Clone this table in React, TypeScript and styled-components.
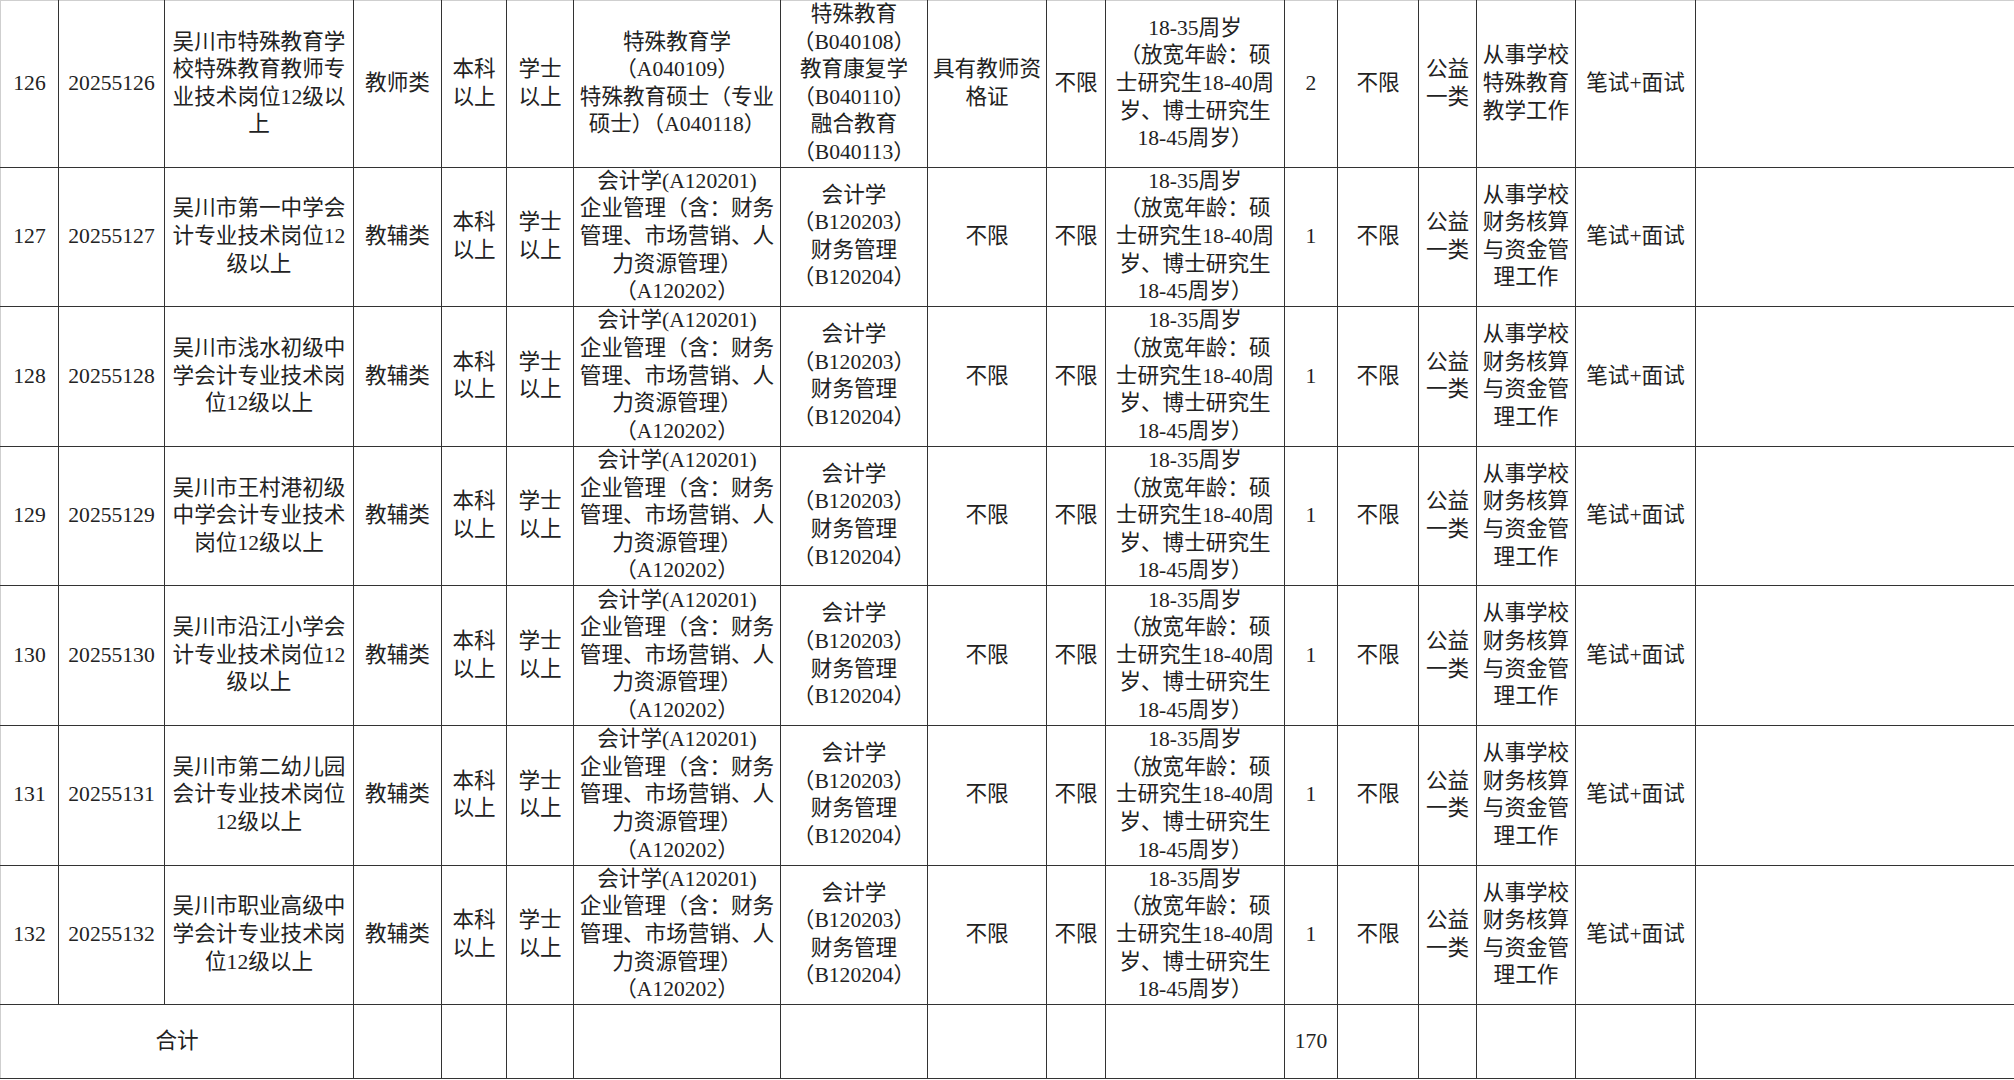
import React from 'react';
import styled, { createGlobalStyle } from 'styled-components';

const GlobalStyle = createGlobalStyle`
  html, body {
    margin: 0;
    padding: 0;
    background: #fff;
    overflow: hidden;
  }
`;

const Sheet = styled.div`
  width: 2014px;
  height: 1080px;
  overflow: hidden;
  background: #fff;
`;

const Table = styled.table`
  border-collapse: collapse;
  table-layout: fixed;
  width: 2095px;
  font-family: "Liberation Serif", "Noto Sans CJK SC", serif;
  font-size: 21.6px;
  line-height: 27.6px;
  color: #222;
`;

const Row = styled.tr<{ $h: number }>`
  height: ${props => props.$h}px;

  &:first-child > td {
    border-top-color: #cfcfcf;
  }
`;

const Cell = styled.td`
  border: 1px solid #333;
  padding: 0;
  text-align: center;
  vertical-align: middle;
  white-space: nowrap;
  overflow: hidden;

  &:first-child {
    border-left-color: #cfcfcf;
  }
`;

const colWidths = [58, 106, 189, 88, 65, 67, 207, 147, 119, 59, 179, 53, 81, 58, 99, 120, 400];

type TJob = {
  no: string;
  code: string;
  post: string[];
  kind: string;
  major: string[];
  major2: string[];
  cert: string[];
  count: string;
  duty: string[];
};

const accountingMajor = ['会计学(A120201)', '企业管理（含：财务', '管理、市场营销、人', '力资源管理）', '（A120202）'];
const accountingMajor2 = ['会计学', '（B120203）', '财务管理', '（B120204）'];
const financeDuty = ['从事学校', '财务核算', '与资金管', '理工作'];
const ageLimit = ['18-35周岁', '（放宽年龄：硕', '士研究生18-40周', '岁、博士研究生', '18-45周岁）'];

const jobs: TJob[] = [
  {
    no: '126',
    code: '20255126',
    post: ['吴川市特殊教育学', '校特殊教育教师专', '业技术岗位12级以', '上'],
    kind: '教师类',
    major: ['特殊教育学', '（A040109）', '特殊教育硕士（专业', '硕士）（A040118）'],
    major2: ['特殊教育', '（B040108）', '教育康复学', '（B040110）', '融合教育', '（B040113）'],
    cert: ['具有教师资', '格证'],
    count: '2',
    duty: ['从事学校', '特殊教育', '教学工作'],
  },
  {
    no: '127',
    code: '20255127',
    post: ['吴川市第一中学会', '计专业技术岗位12', '级以上'],
    kind: '教辅类',
    major: accountingMajor,
    major2: accountingMajor2,
    cert: ['不限'],
    count: '1',
    duty: financeDuty,
  },
  {
    no: '128',
    code: '20255128',
    post: ['吴川市浅水初级中', '学会计专业技术岗', '位12级以上'],
    kind: '教辅类',
    major: accountingMajor,
    major2: accountingMajor2,
    cert: ['不限'],
    count: '1',
    duty: financeDuty,
  },
  {
    no: '129',
    code: '20255129',
    post: ['吴川市王村港初级', '中学会计专业技术', '岗位12级以上'],
    kind: '教辅类',
    major: accountingMajor,
    major2: accountingMajor2,
    cert: ['不限'],
    count: '1',
    duty: financeDuty,
  },
  {
    no: '130',
    code: '20255130',
    post: ['吴川市沿江小学会', '计专业技术岗位12', '级以上'],
    kind: '教辅类',
    major: accountingMajor,
    major2: accountingMajor2,
    cert: ['不限'],
    count: '1',
    duty: financeDuty,
  },
  {
    no: '131',
    code: '20255131',
    post: ['吴川市第二幼儿园', '会计专业技术岗位', '12级以上'],
    kind: '教辅类',
    major: accountingMajor,
    major2: accountingMajor2,
    cert: ['不限'],
    count: '1',
    duty: financeDuty,
  },
  {
    no: '132',
    code: '20255132',
    post: ['吴川市职业高级中', '学会计专业技术岗', '位12级以上'],
    kind: '教辅类',
    major: accountingMajor,
    major2: accountingMajor2,
    cert: ['不限'],
    count: '1',
    duty: financeDuty,
  },
];

const Lines = ({ items }: { items: string[] }) => (
  <>
    {items.map((line, i) => (
      <React.Fragment key={i}>
        {i > 0 && <br />}
        {line}
      </React.Fragment>
    ))}
  </>
);

function App() {
  return (
    <Sheet>
      <GlobalStyle />
      <Table>
        <colgroup>
          {colWidths.map((w, i) => (
            <col key={i} style={{ width: w }} />
          ))}
        </colgroup>
        <tbody>
          {jobs.map((job, i) => (
            <Row key={job.no} $h={i === 0 ? 165.7 : 139.6}>
              <Cell>{job.no}</Cell>
              <Cell>{job.code}</Cell>
              <Cell>
                <Lines items={job.post} />
              </Cell>
              <Cell>{job.kind}</Cell>
              <Cell>
                <Lines items={['本科', '以上']} />
              </Cell>
              <Cell>
                <Lines items={['学士', '以上']} />
              </Cell>
              <Cell>
                <Lines items={job.major} />
              </Cell>
              <Cell>
                <Lines items={job.major2} />
              </Cell>
              <Cell>
                <Lines items={job.cert} />
              </Cell>
              <Cell>不限</Cell>
              <Cell>
                <Lines items={ageLimit} />
              </Cell>
              <Cell>{job.count}</Cell>
              <Cell>不限</Cell>
              <Cell>
                <Lines items={['公益', '一类']} />
              </Cell>
              <Cell>
                <Lines items={job.duty} />
              </Cell>
              <Cell>笔试+面试</Cell>
              <Cell />
            </Row>
          ))}
          <Row $h={73.6}>
            <Cell colSpan={3}>合计</Cell>
            <Cell />
            <Cell />
            <Cell />
            <Cell />
            <Cell />
            <Cell />
            <Cell />
            <Cell />
            <Cell>170</Cell>
            <Cell />
            <Cell />
            <Cell />
            <Cell />
            <Cell />
          </Row>
        </tbody>
      </Table>
    </Sheet>
  );
}

export default App;
